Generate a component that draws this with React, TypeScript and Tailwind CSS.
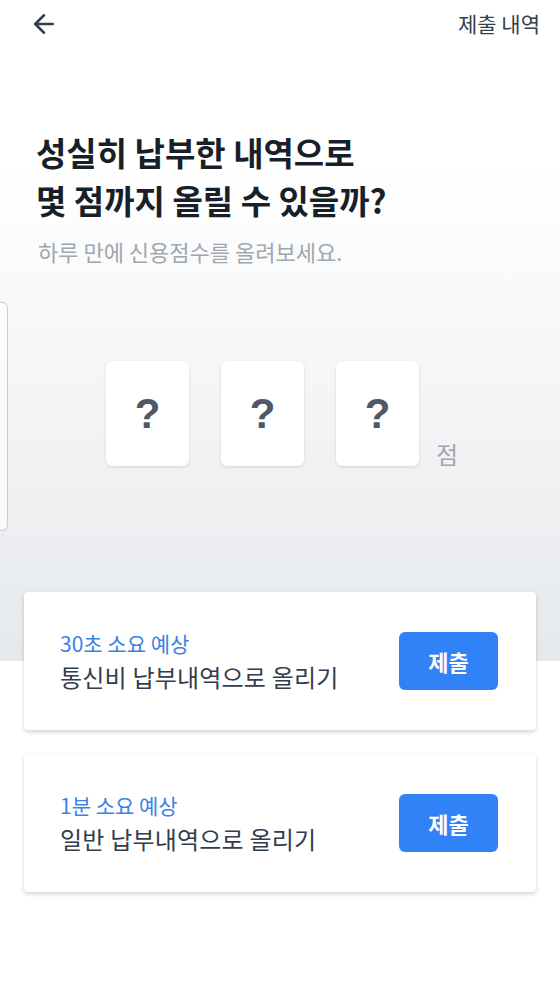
import { ArrowLeft } from "lucide-react";

const FONT = "font-['Noto_Sans_CJK_KR','Noto_Sans',sans-serif]";

function DigitCard() {
  return (
    <div className="flex h-[105px] w-[83px] items-center justify-center rounded-md bg-white shadow-[0_1px_3px_rgba(0,0,0,0.12)]">
      <span className="font-['Liberation_Sans',sans-serif] text-[42px] font-bold leading-none text-[#4e5968]">?</span>
    </div>
  );
}

function ActionCard({ time, label }: { time: string; label: string }) {
  return (
    <div className="flex h-[138px] items-center justify-between rounded bg-white pl-9 pr-[38px] shadow-[0_2px_4px_rgba(0,0,0,0.18)]">
      <div className="flex flex-col">
        <span className="text-[21px] leading-[32px] text-[#3b82e8]">{time}</span>
        <span className="text-[24px] leading-[36px] tracking-[0.2px] text-[#333d4b]">{label}</span>
      </div>
      <button className="h-[58px] w-[99px] rounded-md bg-[#3182f6] text-[22px] font-bold text-white">
        제출
      </button>
    </div>
  );
}

export default function App() {
  return (
    <div className={`min-h-[995px] w-full bg-white ${FONT}`}>
      <div className="bg-gradient-to-b from-white from-[25%] to-[#e6e9ec] pb-[130px]">
        <header className="flex h-12 items-center justify-between pl-[29px] pr-5">
          <ArrowLeft className="h-[30px] w-[30px] text-[#333d4b]" strokeWidth={2} />
          <span className="text-[21px] text-[#333d4b]">제출 내역</span>
        </header>

        <div className="mt-20 pl-9">
          <h1 className="text-[33px] font-bold leading-[48px] text-[#191f28]">
            성실히 납부한 내역으로
            <br />
            몇 점까지 올릴 수 있을까?
          </h1>
          <p className="mt-[13px] pl-0.5 text-[22px] leading-[28px] text-[#a0a7b1]">하루 만에 신용점수를 올려보세요.</p>
        </div>

        <div className="mt-[37px] flex h-[229px] items-center">
          <div className="h-full w-[8px] rounded-r-md border-y border-r border-[#c9cdd2] bg-white/60" />
          <div className="flex flex-1 items-end justify-center gap-[32px] pr-[4px] pb-[6px]">
            <DigitCard />
            <DigitCard />
            <div className="flex items-end gap-[17px]">
              <DigitCard />
              <span className="text-[24px] leading-none text-[#a0a7b1]">점</span>
            </div>
          </div>
        </div>
      </div>

      <div className="-mt-[69px] flex flex-col gap-6 px-6">
        <ActionCard time="30초 소요 예상" label="통신비 납부내역으로 올리기" />
        <ActionCard time="1분 소요 예상" label="일반 납부내역으로 올리기" />
      </div>
    </div>
  );
}
